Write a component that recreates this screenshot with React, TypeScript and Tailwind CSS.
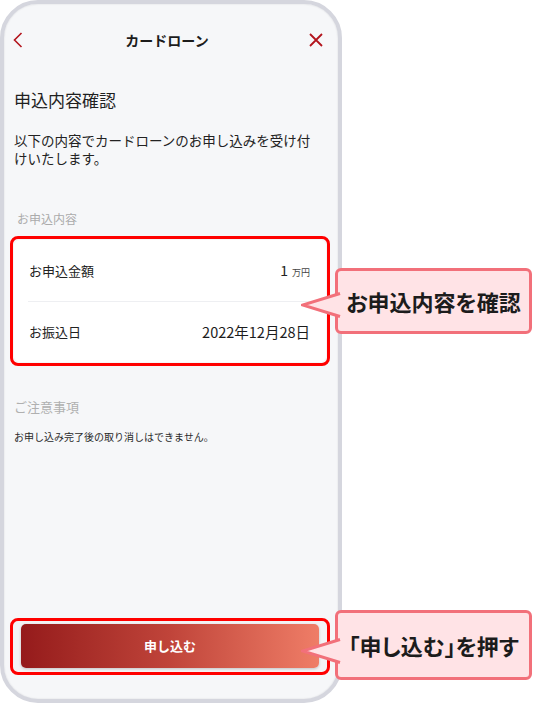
import React from 'react';

const JP = "font-['Noto_Sans_CJK_JP','Noto_Sans',sans-serif]";

const Callout: React.FC<{ text: string; className: string; arrowTop: string }> = ({ text, className, arrowTop }) => (
  <div
    className={`absolute left-[335px] w-[197px] flex items-center justify-center rounded-[6px] border-[3px] border-[#f2707a] bg-[#ffe3e6] ${className}`}
  >
    {/* arrow */}
    <svg width="40" height="26" viewBox="0 0 40 26" className={`absolute left-[-37px] ${arrowTop}`}>
      <polygon points="1.5,13 40,0.5 40,25.5" fill="#ffe3e6" />
      <polyline points="39,1.5 1.5,13 39,24.5" fill="none" stroke="#f2707a" strokeWidth="3" strokeLinejoin="miter" />
    </svg>
    <span className="text-[22px] leading-[28px] font-bold text-[#1c1c1c] [font-feature-settings:'palt']">{text}</span>
  </div>
);

const App: React.FC = () => {
  return (
    <div className={`relative w-[536px] h-[705px] bg-white overflow-hidden ${JP}`}>
      {/* Phone */}
      <div className="w-[342px] h-[703px] rounded-[38px] border-[4px] border-[#d5d6de] bg-[#f6f7f9] flex flex-col shadow-[inset_0_0_2px_rgba(0,0,0,0.12)]">
        {/* Header */}
        <div className="h-[72px] flex items-center justify-between pl-[9px] pr-[15px]">
          <svg width="10" height="16" viewBox="0 0 10 16">
            <polyline points="8.5,1 1.5,8 8.5,15" fill="none" stroke="#b3141d" strokeWidth="1.6" />
          </svg>
          <span className="text-[14px] font-bold text-[#1c1c1c] ml-[2px]">カードローン</span>
          <svg width="14" height="14" viewBox="0 0 14 14">
            <path d="M1 1 L13 13 M13 1 L1 13" stroke="#b3141d" strokeWidth="1.8" />
          </svg>
        </div>

        <div className="flex-1 flex flex-col pl-[6px] pr-[8px] pb-[24px]">
          <h1 className="mt-[12px] px-[4px] text-[17px] leading-[24px] text-[#1f1f1f]">申込内容確認</h1>
          <p className="mt-[19px] px-[4px] w-[310px] text-[13.5px] leading-[18px] text-[#222]">
            以下の内容でカードローンのお申し込みを受け付けいたします。
          </p>

          <div className="mt-[44px] px-[7px] text-[12px] leading-[16px] text-[#ababab]">お申込内容</div>

          {/* highlighted card */}
          <div className="mt-[9px] rounded-[8px] border-[3px] border-[#ff0000] p-[1px]">
            <div className="rounded-[6px] bg-white">
              <div className="h-[61px] flex items-center justify-between pl-[15px] pr-[16px]">
                <span className="text-[13px] text-[#222]">お申込金額</span>
                <span className="flex items-baseline text-[#222]">
                  <span className="text-[14px]">1</span>
                  <span className="ml-[4px] text-[9px] text-[#444]">万円</span>
                </span>
              </div>
              <div className="mx-[14px] h-px bg-[#eeeff2]" />
              <div className="h-[60px] flex items-center justify-between pl-[15px] pr-[16px]">
                <span className="text-[13px] text-[#222]">お振込日</span>
                <span className="text-[14.5px] text-[#1c1c1c]">2022年12月28日</span>
              </div>
            </div>
          </div>

          <div className="mt-[32px] px-[4px] text-[13px] leading-[18px] text-[#b0b0b0]">ご注意事項</div>
          <div className="mt-[14px] px-[4px] text-[10px] leading-[14px] text-[#2a2a2a]">
            お申し込み完了後の取り消しはできません。
          </div>

          {/* button */}
          <div className="mt-auto rounded-[8px] border-[3px] border-[#ff0000] px-[8px] pt-[3px] pb-[4px] bg-[#f3f3f5]">
            <button className="w-full h-[44px] rounded-[5px] bg-linear-to-r from-[#951a1b] via-[#c0443a] to-[#ef7d67] text-white text-[13px] font-bold shadow-[0_1px_3px_rgba(0,0,0,0.2)]">
              申し込む
            </button>
          </div>
        </div>
      </div>

      <Callout text="お申込内容を確認" className="top-[268px] h-[66px]" arrowTop="top-[21px]" />
      <Callout text="「申し込む」を押す" className="top-[610px] h-[70px]" arrowTop="top-[25px]" />
    </div>
  );
};

export default App;
